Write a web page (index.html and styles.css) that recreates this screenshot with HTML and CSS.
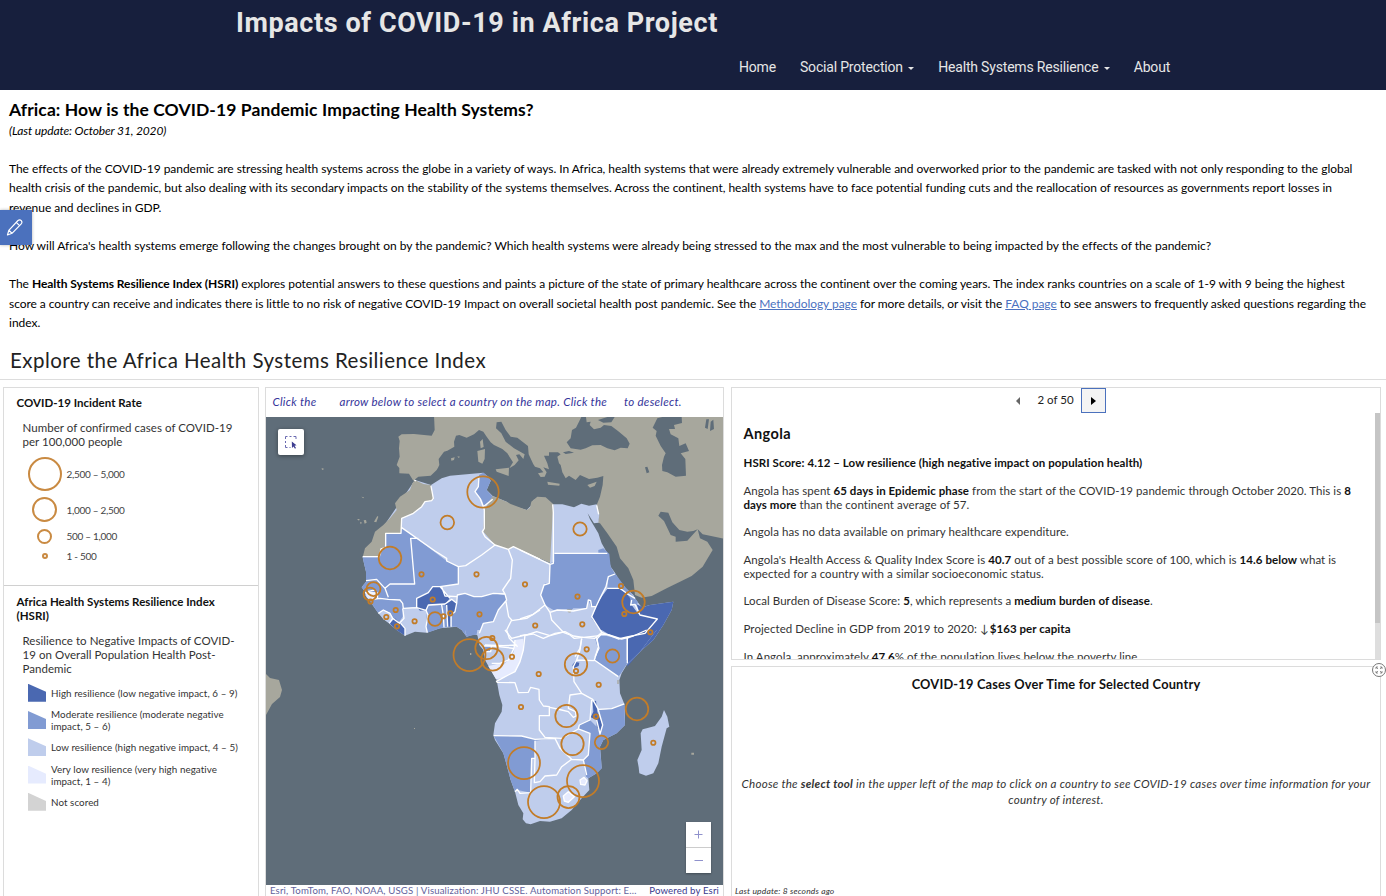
FILE: index.html
```html
<!DOCTYPE html>
<html lang="en">
<head>
<meta charset="utf-8">
<title>Impacts of COVID-19 in Africa Project</title>
<link rel="stylesheet" href="styles.css">
</head>
<body>
<header class="site-header">
  <h1 class="site-title">Impacts of COVID-19 in Africa Project</h1>
  <nav class="site-nav">
    <a class="nav-home">Home</a><a class="nav-social">Social Protection <i class="caret"></i></a><a class="nav-health">Health Systems Resilience <i class="caret"></i></a><a class="nav-about">About</a>
  </nav>
</header>
<main>
<section class="intro">
  <h2 class="intro-title">Africa: How is the COVID-19 Pandemic Impacting Health Systems?</h2>
  <p class="updated">(Last update: October 31, 2020)</p>
  <p class="para p1"><span class="l1">The effects of the COVID-19 pandemic are stressing health systems across the globe in a variety of ways. In Africa, health systems that were already extremely vulnerable and overworked prior to the pandemic are tasked with not only responding to the global</span><br><span class="l2">health crisis of the pandemic, but also dealing with its secondary impacts on the stability of the systems themselves. Across the continent, health systems have to face potential funding cuts and the reallocation of resources as governments report losses in</span><br>revenue and declines in GDP.</p>
  <p class="para p2">How will Africa's health systems emerge following the changes brought on by the pandemic? Which health systems were already being stressed to the max and the most vulnerable to being impacted by the effects of the pandemic?</p>
  <p class="para p3"><span class="l3">The <b>Health Systems Resilience Index (HSRI)</b> explores potential answers to these questions and paints a picture of the state of primary healthcare across the continent over the coming years. The index ranks countries on a scale of 1-9 with 9 being the highest</span><br><span class="l4">score a country can receive and indicates there is little to no risk of negative COVID-19 Impact on overall societal health post pandemic. See the <a class="link">Methodology page</a> for more details, or visit the <a class="link">FAQ page</a> to see answers to frequently asked questions regarding the</span><br>index.</p>
  <div class="edit-tab"><svg width="32" height="36" viewBox="0 0 32 36"><g fill="none" stroke="#fff" stroke-width="1.2" stroke-linejoin="round"><path d="M7.500 25 8.800 20.300 18 10.500Q19.800 9 21.300 10.700 22.600 12.200 21.500 13.700L12 23.300ZM8.800 20.300 12 23.300M16.300 12.300 19.500 15.600"/></g></svg></div>
</section>
<h2 class="explore">Explore the Africa Health Systems Resilience Index</h2>
<div class="dashboard">
  <aside class="panel legend">
    <section class="rate">
      <h3>COVID-19 Incident Rate</h3>
      <p class="legend-note">Number of confirmed cases of COVID-19<br>per 100,000 people</p>
      <ul class="sizes">
        <li class="s1"><span class="symbol"><i class="ring r1"></i></span>2,500 – 5,000</li>
        <li class="s2"><span class="symbol"><i class="ring r2"></i></span>1,000 – 2,500</li>
        <li class="s3"><span class="symbol"><i class="ring r3"></i></span>500 – 1,000</li>
        <li class="s4"><span class="symbol"><i class="ring r4"></i></span>1 - 500</li>
      </ul>
    </section>
    <section class="hsri">
      <h3>Africa Health Systems Resilience Index<br>(HSRI)</h3>
      <p class="legend-note">Resilience to Negative Impacts of COVID-<br>19 on Overall Population Health Post-<br>Pandemic</p>
      <ul class="classes">
        <li><i class="swatch high"></i><span>High resilience (low negative impact, 6 – 9)</span></li>
        <li><i class="swatch mod"></i><span>Moderate resilience (moderate negative<br>impact, 5 – 6)</span></li>
        <li><i class="swatch low"></i><span>Low resilience (high negative impact, 4 – 5)</span></li>
        <li><i class="swatch vlow"></i><span>Very low resilience (very high negative<br>impact, 1 – 4)</span></li>
        <li><i class="swatch none"></i><span>Not scored</span></li>
      </ul>
    </section>
  </aside>
  <section class="panel map-panel">
    <p class="hint"><span class="h1s">Click the</span><span class="h2s">arrow below to select a country on the map. Click the</span><span class="h3s">to deselect.</span></p>
    <div class="map">
      <svg class="map-svg" width="457" height="468" viewBox="266 417 457 468">
        <rect class="sea" x="266" y="417" width="457" height="468"/>
        <g transform="translate(494 385) scale(.33333)">
          <path class="land" d="M-180 90-178 135-187 152-240 147-277 148-287 155-283 168-285 190-283 215-292 240-284 249-284 265-255 266-242 287-227 275-190 272-172 255-168 248-164 240-166 222-150 200-140 197-119 185-120 170-114 152-104 150-82 158-60 148-45 135-32 140-22 155-10 172 0 180 25 192 40 205 57 232 46 250 62 240 74 226 66 210 76 208 88 222 92 208 60 190 35 170 22 145 6 130 8 112 22 110 35 135 50 155 70 158 102 183 104 208 118 238 123 245 138 250 148 262 132 265 140 276 152 275 158 262 148 247 165 253 160 235 150 212 165 212 165 202 192 202 200 208 190 215 195 235 200 240 205 262 215 280 225 272 245 285 258 270 285 282 310 278 328 273 326 300 318 335 308 360 316 388 311 413 318 415 340 445 368 485 378 520 403 550 418 585 423 630 443 638 473 633 518 610 558 590 593 573 626 545 638 525 656 495 640 470 618 460 611 433 626 448 690 461V90Z"/>
          <path class="sea" d="M262 96 276 96 278 112 290 110 287 120 300 133 320 128 330 120 352 123 372 138 398 160 407 176 401 190 380 188 362 196 340 190 320 180 295 181 275 190 260 194 230 190 218 172 230 160 234 135 246 128ZM312 105 340 96 362 96 352 112 328 113ZM207 202 225 198 240 203 215 207ZM490 100 505 96 563 96 564 114 540 120 543 132 525 132 530 148 553 160 556 183 575 175 585 198 560 205 574 222 576 272 545 275 520 262 505 258 504 240 510 215 515 205 500 183 485 152 488 138 476 128ZM453 247 460 245 466 262 458 265ZM637 103 645 103 641 132 633 128ZM650 110 658 104 660 132 648 138Z"/>
          <path class="sea" d="M611 433 580 467 545 470 545 455 530 450 510 408 493 392 500 380 523 383 535 412 556 435 580 440 598 438Z"/>
          <path class="land" d="M160 290 197 296 196 302 162 299ZM280 300 308 290 302 303 288 308ZM5 253 45 248 44 273 8 260ZM-50 198-27 192-28 222-35 236-47 230ZM-42 170-34 162-31 186-40 190ZM-129 220-118 217-120 225-128 227ZM-110 214-102 215-106 219ZM-517 249-509 252-516 255ZM-398 335-390 337-392 340ZM-411 402-403 402-405 407ZM-402 410-396 413-400 418ZM-391 406-384 405-382 413-388 416ZM-360 410-350 393-347 395-353 412Z"/>
        </g>
        <g transform="translate(350 460) scale(.33333)">
          <path class="low" d="M195 60 243 75 275 55 300 47 350 43 400 38 415 50 422 62 410 90 428 108 470 125 480 135 530 150 545 135 550 120 570 113V600H430L400 560 398 535 375 522 350 530 335 510 320 500 270 505 230 518 195 515 165 527 140 510 105 480 85 460 70 438 58 420 45 405 45 395 35 382 48 365 48 335 42 310 38 292Z"/>
          <path class="land" d="M195 60 220 72 243 75 250 120 225 125 215 140 190 160 155 175 153 220H107L105 255 88 290 38 292 45 265 65 245 75 215 100 195 120 175 140 150 135 130 150 110 180 90 187 70Z"/>
          <path class="mod" d="M107 220H153V200L290 303 325 320 325 372 270 380 235 400 200 415 200 440 160 445 158 470 148 485 130 475 120 460 100 450 85 460 70 438 45 405 45 395 35 382 48 365 48 335 42 310 38 292H88L105 255ZM232 437 275 435 290 435 292 500 270 505 232 518 228 500ZM305 500V465L318 440 322 405 345 400 372 410 395 410 430 400 465 405 470 420 445 450 430 485 400 490 388 520 350 530 335 510 320 500ZM387 45 400 38 415 50 422 62 410 90 428 110 403 142 396 120 375 95 385 80ZM398 553H420V575H400Z"/>
          <path class="vlow" d="M45 397 82 399 76 415 62 422 50 412Z"/>
          <path class="low" d="M88 462 100 450 120 458 128 475 118 490 100 478Z"/>
          <path class="high" d="M200 440 200 415 235 398 248 380 270 378 285 400 300 415 285 432 235 435 228 450 210 452ZM118 490 135 475 150 490 165 505 165 527 140 510ZM283 432 305 418 320 430 315 455 303 465 303 500H292L290 440Z"/>
        </g>
        <path class="land" transform="translate(494 385) scale(.33333)" d="M-4 333 38 350 50 357 98 375 108 368 112 350 130 335 155 337 175 355 180 360V528L170 535 78 495 58 485 43 493 3 480-32 440-29 375Z"/>
        <g transform="translate(520 470) scale(.33333)">
          <path class="low" d="M100 103 127 103 162 112 184 101 207 107 230 103 238 133 235 158 222 160 203 130 210 148 235 190 245 220 262 250 272 290 285 308 300 335 318 355 340 375 350 392 365 412 390 405 460 395 455 420 430 465 400 510 360 545 337 570H0V240L90 280Z"/>
          <path class="mod" d="M103 250H235V240L250 235 268 252 272 290 285 312 265 320 258 350 240 385 228 410 212 408 205 390 200 415 160 415 150 425 140 417 100 420 75 405 62 375 75 340 88 340 90 280 103 275ZM285 310 318 355 345 385 335 400 320 370 300 355 262 355 265 320ZM345 385 354 397 350 404 338 406 335 400Z"/>
          <path class="land" d="M140 418 156 418 151 428 144 427Z"/>
          <path class="high" d="M262 357 295 355 320 370 330 385 335 405 355 432 412 447 375 490 325 500 295 507 245 487 215 445 228 410 245 380ZM350 403 368 412 390 405 460 395 455 420 430 465 400 510 360 545 322 590V502L375 490 412 447 360 435Z"/>
        </g>
        <g transform="translate(440 630) scale(.33333)">
          <path class="low" d="M75 0 78 15 112 14 118 45 130 60 135 90 155 125 170 150 178 195 187 225 185 245 165 280 160 315 165 330 190 370 200 405 212 450 225 485 235 525 250 550 248 568 258 580 272 583 300 573 330 575 365 565 395 540 425 505 448 480 445 445 470 430 485 415 483 385 480 350 490 330 530 310 555 285 555 260 553 222 540 190 538 150 545 130 560 105 600 65 650 0ZM672 240 682 260 688 290 680 295 665 350 655 400 640 430 618 437 598 430 596 412 592 390 605 360 602 310 608 298 620 295 645 288 665 260Z"/>
          <path class="mod" d="M75 0H112L110 14 80 17ZM470 18 500 18 540 27 562 25V100L543 130 535 140 465 90 475 60 465 25ZM475 240 515 236 553 222 555 285 530 310 490 330 480 350 485 415 470 430 445 445 438 440 430 390 445 375 450 310 415 297 418 285 450 270 470 290 480 310 488 285 475 265ZM161 317 245 318 285 328 345 325 285 332V385H275L273 488 232 480 225 485 212 450 200 405 190 370ZM132 48 152 50 150 63 132 62Z"/>
          <path class="vlow" d="M155 125 145 108 160 105 180 100 190 105 205 90 222 65 225 30 250 26 250 60 240 95 225 125 205 135 190 143 168 148ZM370 498 385 485 403 500 385 517 373 513ZM420 450 432 442 441 452 435 465 422 463Z"/>
          <path class="high" d="M485 0 505 12 545 27 580 18 562 28V102L600 65 650 0ZM458 215 468 212 472 245 488 285 480 308 470 290 470 270 452 262 460 245ZM397 105 405 95 418 98 416 108 400 115Z"/>
          <path class="land" d="M532 150h4v12h-4zM754 368h8v6h-8zM90 69h4v6h-4z"/>
        </g>
        <g class="borders" transform="translate(350 460) scale(.33333)">
          <path d="M193 60 198 63M243 78 250 115 245 122 225 125 215 140 190 160 155 175 153 220H107V262L93 267 88 290H38M155 203 255 273 290 295 290 303 325 320 347 317 395 285 435 255 405 230 397 215 403 205V150L400 140M387 50 385 80 375 95 390 115 400 140 428 118M435 255 475 268 490 260 570 298M475 268 487 300 482 355 458 390 465 402M205 235H182L194 372H120L105 385 115 412M48 362 80 358 105 385M45 398 82 399 83 415M52 395 75 390M70 418 90 415 115 418 150 420 158 430 160 445 200 443 228 451M85 460 100 450 120 460 128 475 118 490M128 475 148 490 162 475 158 445M152 490 165 505V527M325 320 325 372 270 380 300 415M200 443 200 415 235 398 248 380 270 380 M228 451 235 435 285 432 305 418 320 430 315 455 303 465V500M320 430 322 405 345 400 372 410 395 410 430 400 465 402 470 420 445 450 430 485 400 490 388 520M228 451 234 465 228 500 232 518M275 435 280 465 282 502M290 435 293 500M275 380 285 408 322 410M468 425 476 470 485 480 470 510 478 535 503 560M485 482 530 475 570 450M405 555 460 557 500 555"/>
        </g>
        <g class="borders" transform="translate(520 470) scale(.33333)">
          <path d="M230 106 236 133M98 103 100 128V280L90 283 0 240M103 250H262M90 283 88 340 72 345 62 375 75 405 40 433 0 447M75 405 90 427 112 420 160 423 200 415 205 390 212 392 215 410 228 410 240 385 258 350 265 320 285 312M262 355 300 355 320 370 345 385M335 390 332 405 345 403 360 435 412 447 375 490 325 500 295 507 245 487 215 440 228 410M90 427 95 450 130 487 150 495 162 505 240 497 245 485M0 497 20 495 50 485 90 497 135 485M185 507 180 535 165 560M240 497 230 508 237 535 225 560M322 502V570"/>
        </g>
        <g class="borders" transform="translate(440 630) scale(.33333)">
          <path d="M255 15 250 60 240 95 225 125 205 135 190 143 168 155M195 0 215 25 255 15 280 12 310 25 345 10 375 5 400 18 430 22 465 25 480 12 505 14 545 27 580 18 620 0M132 48 160 48 220 55M132 65 152 65 155 48M155 100 180 100 205 90 222 55 225 30M470 20 475 50 463 90 535 140M425 25 420 60 410 90 463 92M562 25V100M410 90 400 110 402 155 425 190 458 208 475 238 515 236 553 222M170 157 225 158 235 188 265 187 272 172 297 178 298 210 310 228 328 230V257H298V300L315 322 365 325 415 297M330 232 365 240 385 245 400 262 408 258 407 245 385 235 390 195 425 190M161 317 245 318 285 328 345 325M285 332V385H275L272 488 240 490 232 478 225 485M345 325 360 355 395 388 430 390 445 375 450 310 415 297 418 285 450 270 455 210M470 270 480 312 488 285 475 240M395 388 365 410 350 435 315 438 300 455 283 458 285 385M430 390 440 435M370 498 385 485 403 500 385 517 373 513ZM420 450 432 442 441 452 435 465 422 463Z"/>
        </g>
        <path class="land" d="M266 674 270 678 279 680 282 690 280 697 272 704 266 715ZM414 728h1v1h-1z"/>
        <g class="cases">
          <circle cx="483" cy="492" r="15.700"/><circle cx="447.300" cy="522.500" r="6.800"/><circle cx="580" cy="529" r="6.700"/><circle cx="390" cy="558" r="11.300"/><circle cx="373.500" cy="589" r="7"/><circle cx="370" cy="594" r="6.500"/><circle cx="435" cy="619" r="6.800"/><circle cx="469.500" cy="655" r="16"/><circle cx="486.500" cy="648" r="11.200"/><circle cx="492.500" cy="659.500" r="11.200"/><circle cx="633.500" cy="602" r="11.300"/><circle cx="576" cy="664.500" r="11.200"/><circle cx="612.500" cy="656" r="6.700"/><circle cx="637" cy="709" r="11.300"/><circle cx="566.500" cy="716" r="11.200"/><circle cx="572.500" cy="744" r="11.200"/><circle cx="601.500" cy="742.300" r="6.700"/><circle cx="524" cy="763" r="16"/><circle cx="583" cy="781" r="16"/><circle cx="544" cy="802" r="16"/><circle cx="568.500" cy="797" r="11"/>
          <circle cx="421.500" cy="574.300" r="2.200"/><circle cx="476.500" cy="574.300" r="2.200"/><circle cx="525" cy="584.300" r="2.200"/><circle cx="577.500" cy="596.600" r="2.200"/><circle cx="432.700" cy="599.500" r="2.200"/><circle cx="479.500" cy="614.300" r="2.200"/><circle cx="370.500" cy="601.500" r="2.200"/><circle cx="395.700" cy="610" r="2.200"/><circle cx="386.300" cy="617" r="2.200"/><circle cx="397" cy="626.300" r="2.200"/><circle cx="414.600" cy="621.200" r="2.200"/><circle cx="443.500" cy="616.200" r="2.200"/><circle cx="450.300" cy="613.300" r="2.200"/><circle cx="535.200" cy="625.500" r="2.200"/><circle cx="582.300" cy="624.300" r="2.200"/><circle cx="621" cy="586" r="2.200"/><circle cx="624.300" cy="614" r="2.200"/><circle cx="650.300" cy="632.200" r="2.200"/><circle cx="586.700" cy="649.300" r="2.200"/><circle cx="492.300" cy="638" r="2.200"/><circle cx="512" cy="656.700" r="2.200"/><circle cx="538.700" cy="674" r="2.200"/><circle cx="576" cy="671" r="2.200"/><circle cx="598.700" cy="684.700" r="2.200"/><circle cx="521" cy="707" r="2.200"/><circle cx="596" cy="716.500" r="2.200"/><circle cx="653.300" cy="742.700" r="2.200"/>
        </g>
      </svg>
      <button class="select-tool"><svg width="26" height="26" viewBox="0 0 26 26"><path d="M7.500 10V7.500H9.500M11.500 7.500H13.500M15.500 7.500H18V10M7.500 12V14M7.500 16V18.500H9.500M11.500 18.500H12.500" fill="none" stroke="#6a6ab0" stroke-width="1"/><path d="M13.800 12.500 18.500 16.300 16.500 16.700 18 19 17 19.800 15.500 17.500 14 19Z" fill="#3d3d91"/></svg></button>
      <div class="zoom"><button class="zbtn"><svg width="25" height="25"><path d="M8.500 12.500H16.500M12.500 8.500V16.500" stroke="#8f91cc" stroke-width="1"/></svg></button><button class="zbtn"><svg width="25" height="25"><path d="M8.500 12.500H17" stroke="#8f91cc" stroke-width="1"/></svg></button></div>
    </div>
    <p class="credits"><span class="sources">Esri, TomTom, FAO, NOAA, USGS | Visualization: JHU CSSE. Automation Support: E…</span><span class="powered">Powered by Esri</span></p>
  </section>
  <div class="right">
    <section class="panel details">
      <div class="pager"><i class="prev"></i><span>2 of 50</span><button class="next"><i></i></button></div>
      <div class="story">
        <h3 class="country">Angola</h3>
        <p class="d1"><b>HSRI Score: 4.12 – Low resilience (high negative impact on population health)</b></p>
        <p class="d2"><span>Angola has spent <b>65 days in Epidemic phase</b> from the start of the COVID-19 pandemic through October 2020. This is <b>8</b></span><br><b>days more</b> than the continent average of 57.</p>
        <p class="d3">Angola has no data available on primary healthcare expenditure.</p>
        <p class="d4">Angola's Health Access &amp; Quality Index Score is <b>40.7</b> out of a best possible score of 100, which is <b>14.6 below</b> what is<br>expected for a country with a similar socioeconomic status.</p>
        <p class="d5">Local Burden of Disease Score: <b>5</b>, which represents a <b>medium burden of disease</b>.</p>
        <p class="d6">Projected Decline in GDP from 2019 to 2020: <span class="arrow">↓</span> <b>$163 per capita</b></p>
        <p class="d7">In Angola, approximately <b>47.6</b>% of the population lives below the poverty line.</p>
      </div>
      <div class="scroll"><i></i></div>
    </section>
    <section class="panel chart">
      <h3>COVID-19 Cases Over Time for Selected Country</h3>
      <p class="choose">Choose the <b>select tool</b> in the upper left of the map to click on a country to see COVID-19 cases over time information for your<br>country of interest.</p>
      <p class="seconds">Last update: 8 seconds ago</p>
      <svg class="expand" width="16" height="16" viewBox="0 0 16 16"><circle cx="8" cy="8" r="6.500" fill="#fff" stroke="#777"/><path d="M5 7V5H7M9 5H11V7M5 9V11H7M9 11H11V9M5 5 7 7M11 5 9 7M5 11 7 9M11 11 9 9" fill="none" stroke="#777" stroke-width=".8"/></svg>
    </section>
  </div>
</div>
</main>
</body>
</html>
```
FILE: styles.css
```css
* { box-sizing: border-box; }
body { margin: 0; width: 1386px; height: 896px; overflow: hidden; background: #fff; color: #222; font-family: Lato, "Open Sans", sans-serif; }
h1, h2, h3, p, ul { margin: 0; padding: 0; list-style: none; font-weight: 400; }
button { border: 0; padding: 0; margin: 0; background: #fff; }
main { white-space: nowrap; }
svg { display: block; }

.site-header { height: 90px; background: #171f3d; padding: 6px 0 0 236px; font-family: Roboto, sans-serif; color: #e6e6e6; white-space: nowrap; }
.site-title { font-size: 27px; line-height: 35px; font-weight: 700; letter-spacing: .6px; }
.site-nav { display: flex; gap: 24px; margin: 16px 0 0 503px; font-size: 14px; line-height: 20px; letter-spacing: -.18px; }
.caret { display: inline-block; border: 3px solid transparent; border-top-color: #e6e6e6; border-bottom: 0; margin-left: 2px; vertical-align: 2px; }

.intro { position: relative; height: 253px; padding: 9px 9px 0; color: #000; }
.intro-title { font-size: 17.500px; line-height: 22px; font-weight: 700; letter-spacing: .09px; }
.updated { font-size: 12px; line-height: 20px; font-style: italic; letter-spacing: -.13px; }
.para { font-size: 12px; line-height: 19.400px; }
.p1 { margin-top: 18px; letter-spacing: -.03px; }
.l1 { letter-spacing: -.035px; }
.l2 { letter-spacing: -.024px; }
.p2 { margin-top: 18.800px; letter-spacing: -.018px; }
.p3 { margin-top: 18.800px; }
.l3 { letter-spacing: -.043px; }
.l4 { letter-spacing: -.05px; }
.link { color: #4b71c0; text-decoration: underline; }
.edit-tab { position: absolute; left: 0; top: 120px; width: 32px; height: 35px; background: #4b71bd; box-shadow: 0 0 3px rgba(0,0,0,.3); }
.explore { height: 37px; padding: 4px 10px 0; border-bottom: 1px solid #ddd; font-size: 20.500px; line-height: 27px; letter-spacing: .45px; }

.dashboard { display: grid; grid-template-columns: 256px 459px 650px; column-gap: 6px; padding: 7px 0 0 3px; height: 516px; }
.panel { border: 1px solid #dcdcdc; background: #fff; }
.legend, .map-panel { border-bottom: 0; height: 509px; }
.legend h3 { font-size: 11.500px; line-height: 14px; font-weight: 700; color: #111; letter-spacing: .02px; }
.legend-note { font-size: 11.500px; line-height: 14px; padding-left: 6px; color: #333; letter-spacing: .04px; }
.rate { height: 198px; padding: 8px 0 0 12.500px; border-bottom: 1px solid #d0d0d0; }
.rate .legend-note { margin-top: 11px; }
.sizes { font-size: 10px; color: #444; padding: 7px 0 0 11px; letter-spacing: -.3px; }
.sizes li { display: flex; align-items: center; }
.s1 { height: 36px; }
.s2 { height: 35px; }
.s3 { height: 18px; }
.s4 { height: 22px; }
.symbol { width: 34px; margin-right: 5px; display: flex; justify-content: center; }
.ring { border: 2px solid #c98a42; border-radius: 50%; }
.r1 { width: 34px; height: 34px; }
.r2 { width: 25px; height: 25px; }
.r3 { width: 15px; height: 15px; }
.r4 { width: 6px; height: 6px; }
.hsri { padding: 9px 0 0 12.500px; }
.hsri .legend-note { margin-top: 11px; }
.classes { padding: 3px 0 0 11.500px; font-size: 9.800px; line-height: 12px; color: #333; letter-spacing: .07px; }
.classes li { display: flex; align-items: center; height: 27.300px; }
.swatch { width: 18px; height: 18px; margin-right: 5px; clip-path: polygon(0 0, 100% 45%, 100% 100%, 0 100%); }
.high { fill: #4a68b1; background: #4a68b1; }
.mod { fill: #819bd3; background: #819bd3; }
.low { fill: #bfcdec; background: #bfcdec; }
.vlow { fill: #e6ebfe; background: #e6ebfe; }
.none { background: #d3d3d3; }

.map-panel { display: flex; flex-direction: column; }
.hint { flex: none; height: 29px; padding: 4px 0 0 6.500px; display: flex; font-size: 11.500px; line-height: 19px; font-style: italic; color: #34349a; letter-spacing: .29px; }
.h1s { width: 67px; }
.h2s { width: 284.500px; }
.map { flex: none; position: relative; height: 468px; }
.sea { fill: #5f6d79; }
.land { fill: #a7a79d; }
.borders path { fill: none; stroke: #fff; stroke-width: 4; stroke-linejoin: round; }
.cases circle { fill: none; stroke: #c27c28; stroke-width: 1.750; }
.select-tool { position: absolute; left: 12px; top: 12px; width: 26px; height: 26px; border-radius: 2px; box-shadow: 0 1px 4px rgba(0,0,0,.4); }
.zoom { position: absolute; right: 12px; bottom: 12px; width: 25px; box-shadow: 0 1px 2px rgba(0,0,0,.3); }
.zbtn { display: block; width: 25px; height: 25px; }
.zbtn + .zbtn { border-top: 1px solid #ccc; height: 26px; }
.credits { display: flex; justify-content: space-between; padding: 0 4px; font-size: 9.600px; line-height: 12px; color: #62629c; letter-spacing: .15px; }
.powered { color: #39398c; }

.right { display: grid; grid-template-rows: 273px 230px; row-gap: 6px; margin: 0 -1px 0 1px; }
.details { position: relative; overflow: hidden; }
.pager { display: flex; align-items: center; height: 25px; padding-left: 284px; font-size: 11.500px; }
.pager span { width: 37px; margin: -3px 6px 0 17.500px; }
.prev { border: 4px solid transparent; border-left: 0; border-right-color: #666; }
.next { width: 25px; height: 25px; border: 1px solid #4b71bd; background: #f4f4f4; display: grid; place-items: center; }
.next i { border: 4px solid transparent; border-right: 0; border-left: 5px solid #000; }
.story { padding-left: 11.500px; font-size: 11.500px; line-height: 14px; color: #333; letter-spacing: .065px; }
.story p { margin-bottom: 13.600px; }
.story b { color: #111; }
.country { font-size: 14.500px; line-height: 20px; font-weight: 700; margin: 11px 0 12px; color: #111; letter-spacing: .4px; }
.arrow { letter-spacing: -2px; }
.scroll { position: absolute; right: 0; top: 25px; width: 5px; height: 247px; background: #dedede; }
.scroll i { display: block; height: 210px; background: #c5c5c5; }
.chart { position: relative; border-bottom: 0; text-align: center; padding-top: 8px; }
.chart h3 { font-size: 12.800px; line-height: 18px; font-weight: 700; color: #111; letter-spacing: .2px; }
.choose { margin-top: 83px; font-size: 11.600px; line-height: 16px; font-style: italic; color: #333; letter-spacing: .23px; }
.seconds { margin-top: 77px; padding-left: 3px; text-align: left; font-size: 8.500px; line-height: 12px; font-style: italic; color: #333; letter-spacing: .16px; }
.expand { position: absolute; right: -7px; top: -5px; }
```
